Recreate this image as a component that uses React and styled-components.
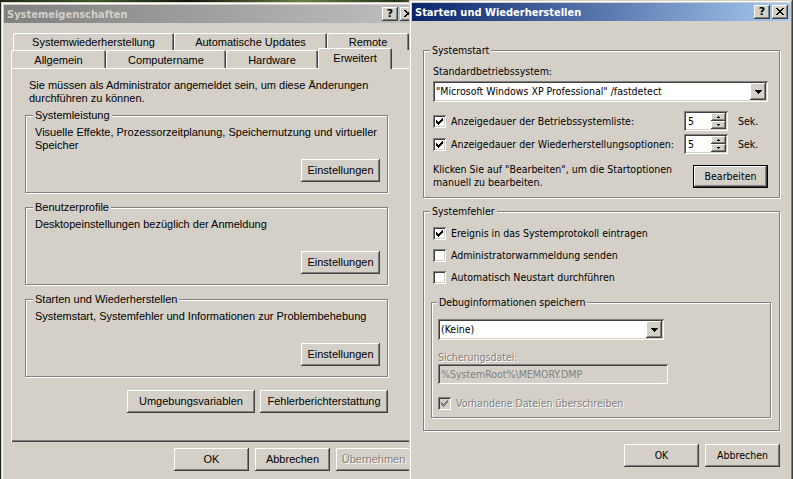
import React from "react";
import styled, { createGlobalStyle, css } from "styled-components";

const FACE = "#d4d0c8";
const LIGHT = "#ffffff";
const SHADOW = "#808080";
const DARK = "#404040";

const LEFT_FONT = `"Liberation Sans", Arial, sans-serif`;
const RIGHT_FONT = `"DejaVu Sans Condensed", "DejaVu Sans", sans-serif`;

const GlobalStyle = createGlobalStyle`
  *, *::before, *::after { box-sizing: border-box; }
  html, body { margin: 0; padding: 0; background: #18220f; overflow: hidden; }
  #root { width: 793px; height: 479px; }
`;

const raisedEdge = css`
  box-shadow: inset -1px -1px ${DARK}, inset 1px 1px ${LIGHT},
    inset -2px -2px ${SHADOW}, inset 2px 2px ${FACE};
`;
const sunkenEdge = css`
  box-shadow: inset 1px 1px ${SHADOW}, inset -1px -1px ${LIGHT},
    inset 2px 2px ${DARK}, inset -2px -2px ${FACE};
`;
const embossed = css`
  color: ${SHADOW};
  text-shadow: 1px 1px 0 ${LIGHT};
`;

const Desktop = styled.div`
  position: relative;
  width: 793px;
  height: 479px;
  overflow: hidden;
  background: linear-gradient(
    90deg,
    #1d2a14 0%,
    #3f5a2a 12%,
    #0f170b 24%,
    #6a8040 38%,
    #233318 50%,
    #b8c098 58%,
    #2e4220 70%,
    #8a9a5a 84%,
    #1a2410 100%
  );
`;

const Window = styled.div`
  position: absolute;
  left: ${(p) => p.$left}px;
  top: ${(p) => p.$top}px;
  width: ${(p) => p.$width}px;
  height: ${(p) => p.$height}px;
  z-index: ${(p) => p.$z};
  padding: 3px;
  display: flex;
  flex-direction: column;
  background: ${FACE};
  color: #000;
  font-family: ${(p) => p.$font};
  font-size: ${(p) => p.$size}px;
  line-height: 13px;
  box-shadow: inset -1px -1px ${DARK}, inset 1px 1px ${FACE},
    inset -2px -2px ${SHADOW}, inset 2px 2px ${LIGHT};
`;

const TitleBar = styled.div`
  flex: none;
  height: 18px;
  display: flex;
  align-items: center;
  padding: 0 2px;
  background: ${(p) =>
    p.$active
      ? "linear-gradient(90deg, #0a246a 0%, #a6caf0 100%)"
      : "linear-gradient(90deg, #808080 0%, #c0c0c0 100%)"};
  color: ${(p) => (p.$active ? "#fff" : FACE)};
  font: bold 11px ${RIGHT_FONT};
`;

const TitleText = styled.span`
  flex: 1;
  padding-left: 1px;
  white-space: nowrap;
  overflow: hidden;
`;

const CaptionButtons = styled.div`
  display: flex;
  gap: 2px;
`;

const CaptionButton = styled.div`
  width: 16px;
  height: 14px;
  display: flex;
  align-items: center;
  justify-content: center;
  background: ${FACE};
  color: #000;
  font: bold 11px "DejaVu Sans", sans-serif;
  line-height: 1;
  padding-bottom: 1px;
  ${raisedEdge}
`;

const PixelGlyph = ({ rows, color = "#000" }) => {
  const w = rows[0].length;
  const h = rows.length;
  return (
    <svg
      width={w}
      height={h}
      viewBox={`0 0 ${w} ${h}`}
      shapeRendering="crispEdges"
      aria-hidden="true"
      style={{ display: "block" }}
    >
      {rows.flatMap((r, y) =>
        [...r].map((c, x) =>
          c === "#" ? (
            <rect key={`${x}-${y}`} x={x} y={y} width="1" height="1" fill={color} />
          ) : null
        )
      )}
    </svg>
  );
};

const CLOSE = [
  "##....##",
  ".##..##.",
  "..####..",
  "...##...",
  "..####..",
  ".##..##.",
  "##....##",
];
const CHECK = [
  "......#",
  ".....##",
  "#...###",
  "##.###.",
  "#####..",
  ".###...",
  "..#....",
];
const DOWN = ["#######", ".#####.", "..###..", "...#..."];
const SPIN_UP = ["..#..", ".###."];
const SPIN_DOWN = [".###.", "..#.."];

const Caption = ({ active, children }) => (
  <TitleBar $active={active}>
    <TitleText>{children}</TitleText>
    <CaptionButtons>
      <CaptionButton>?</CaptionButton>
      <CaptionButton>
        <PixelGlyph rows={CLOSE} />
      </CaptionButton>
    </CaptionButtons>
  </TitleBar>
);

/* ---------- shared controls ---------- */

const Button = styled.div`
  flex: none;
  width: ${(p) => p.$w || 75}px;
  height: 23px;
  display: flex;
  align-items: center;
  justify-content: center;
  background: ${FACE};
  white-space: nowrap;
  ${raisedEdge}
  ${(p) =>
    p.$default &&
    css`
      border: 1px solid #000;
    `}
  ${(p) => p.$disabled && embossed}
`;

const GroupBox = styled.div`
  position: relative;
  flex: none;
  display: flex;
  flex-direction: column;
  border: 1px solid ${SHADOW};
  box-shadow: inset 1px 1px ${LIGHT}, 1px 1px ${LIGHT};
`;

const Legend = styled.span`
  position: absolute;
  top: -7px;
  left: ${(p) => p.$inset}px;
  padding: 0 2px;
  line-height: 13px;
  background: ${FACE};
  white-space: nowrap;
`;

const CheckBoxFrame = styled.span`
  flex: none;
  width: 13px;
  height: 13px;
  padding: 3px;
  display: block;
  background: ${(p) => (p.$disabled ? FACE : "#fff")};
  ${sunkenEdge}
`;

const CheckBox = ({ checked, disabled }) => (
  <CheckBoxFrame $disabled={disabled}>
    {checked && <PixelGlyph rows={CHECK} color={disabled ? SHADOW : "#000"} />}
  </CheckBoxFrame>
);

const CheckLabel = styled.div`
  display: flex;
  align-items: center;
  gap: 5px;
  height: ${(p) => p.$h || 20}px;
  white-space: nowrap;
  ${(p) =>
    p.$disabled &&
    css`
      & > span:last-child {
        ${embossed}
      }
    `}
`;

const Combo = styled.div`
  width: ${(p) => p.$w}px;
  height: 21px;
  padding: 2px;
  display: flex;
  align-items: center;
  background: #fff;
  ${sunkenEdge}
`;

const ComboValue = styled.span`
  flex: 1;
  padding-left: 1px;
  white-space: nowrap;
  overflow: hidden;
`;

const ArrowButton = styled.span`
  flex: none;
  width: 16px;
  height: 17px;
  display: flex;
  align-items: center;
  justify-content: center;
  background: ${FACE};
  ${raisedEdge}
`;

const Dropdown = ({ w, value }) => (
  <Combo $w={w}>
    <ComboValue>{value}</ComboValue>
    <ArrowButton>
      <PixelGlyph rows={DOWN} />
    </ArrowButton>
  </Combo>
);

/* ---------- left window: Systemeigenschaften ---------- */

const PropsClient = styled.div`
  flex: 1;
  display: flex;
  flex-direction: column;
  padding: 10px 0 0 7px;
`;

const TabRow = styled.div`
  display: flex;
  align-items: flex-end;
  height: ${(p) => p.$h}px;
  padding-left: ${(p) => p.$indent || 0}px;
`;

const Tab = styled.div`
  flex: none;
  width: ${(p) => p.$w}px;
  height: ${(p) => p.$h}px;
  padding-top: ${(p) => p.$pt}px;
  text-align: center;
  white-space: nowrap;
  background: ${FACE};
  border-radius: 2px 2px 0 0;
  box-shadow: inset 1px 1px ${LIGHT}, inset -1px 0 ${DARK}, inset -2px 0 ${SHADOW};
  ${(p) =>
    p.$selected &&
    css`
      position: relative;
      z-index: 1;
      margin-bottom: -1px;
    `}
`;

const TabPanel = styled.div`
  flex: none;
  width: 400px;
  height: 374px;
  padding: 11px 23px 0 14px;
  display: flex;
  flex-direction: column;
  background: ${FACE};
  box-shadow: inset 1px 1px ${LIGHT}, inset -1px -1px ${DARK},
    inset -2px -2px ${SHADOW};
`;

const Intro = styled.p`
  margin: 0 0 0 4px;
  white-space: nowrap;
`;

const SectionList = styled.div`
  display: flex;
  flex-direction: column;
  gap: 14px;
  margin-top: 10px;
`;

const SectionBox = styled(GroupBox)`
  height: 78px;
  padding: 10px 7px 10px 9px;
`;

const SectionText = styled.p`
  margin: 0;
`;

const SectionButton = styled(Button)`
  margin-top: auto;
  align-self: flex-end;
`;

const PanelButtons = styled.div`
  display: flex;
  justify-content: flex-end;
  gap: 5px;
  margin-top: 13px;
`;

const DialogButtons = styled.div`
  flex: none;
  display: flex;
  justify-content: flex-end;
  gap: 6px;
  width: ${(p) => p.$w}px;
  margin-top: ${(p) => p.$mt}px;
`;

/* ---------- right window: Starten und Wiederherstellen ---------- */

const StartupClient = styled.div`
  flex: 1;
  display: flex;
  flex-direction: column;
  padding: 29px 10px 0 11px;
`;

const StartBox = styled(GroupBox)`
  padding: 14px 11px 8px 9px;
`;

const FieldLabel = styled.div`
  white-space: nowrap;
  margin-top: ${(p) => p.$mt || 0}px;
  ${(p) => p.$disabled && embossed}
`;

const ComboSpacer = styled.div`
  margin-top: 3px;
`;

const TimeoutGrid = styled.div`
  display: grid;
  grid-template-columns: 1fr 44px 32px;
  grid-auto-rows: 20px;
  column-gap: 10px;
  row-gap: 3px;
  align-items: center;
  margin-top: 9px;
`;

const Spin = styled.div`
  width: 44px;
  height: 20px;
  padding: 2px;
  display: flex;
  background: #fff;
  ${sunkenEdge}
`;

const SpinValue = styled.span`
  flex: 1;
  padding-left: 2px;
  line-height: 16px;
`;

const SpinButtons = styled.div`
  width: 15px;
  display: flex;
  flex-direction: column;
`;

const SpinButton = styled.span`
  flex: 1;
  display: flex;
  align-items: center;
  justify-content: center;
  background: ${FACE};
  ${raisedEdge}
`;

const Spinner = ({ value }) => (
  <Spin>
    <SpinValue>{value}</SpinValue>
    <SpinButtons>
      <SpinButton>
        <PixelGlyph rows={SPIN_UP} />
      </SpinButton>
      <SpinButton>
        <PixelGlyph rows={SPIN_DOWN} />
      </SpinButton>
    </SpinButtons>
  </Spin>
);

const EditRow = styled.div`
  display: flex;
  align-items: center;
  justify-content: space-between;
  margin-top: 9px;
`;

const EditHint = styled.p`
  margin: 0;
  white-space: nowrap;
`;

const ErrorBox = styled(GroupBox)`
  margin-top: 13px;
  padding: 10px 8px 12px 9px;
`;

const DebugBox = styled(GroupBox)`
  margin: 14px 0 0 -2px;
  padding: 16px 6px 3px 6px;
`;

const DisabledField = styled.div`
  width: 230px;
  height: 20px;
  padding: 0 3px;
  display: flex;
  align-items: center;
  background: ${FACE};
  color: ${SHADOW};
  white-space: nowrap;
  ${sunkenEdge}
`;

const Spaced = styled.div`
  margin-top: ${(p) => p.$mt}px;
`;

const Check = ({ checked, disabled, h, children }) => (
  <CheckLabel $h={h} $disabled={disabled}>
    <CheckBox checked={checked} disabled={disabled} />
    <span>{children}</span>
  </CheckLabel>
);

const sections = [
  {
    title: "Systemleistung",
    text: (
      <>
        Visuelle Effekte, Prozessorzeitplanung, Speichernutzung und virtueller
        <br />
        Speicher
      </>
    ),
  },
  { title: "Benutzerprofile", text: "Desktopeinstellungen bezüglich der Anmeldung" },
  {
    title: "Starten und Wiederherstellen",
    text: "Systemstart, Systemfehler und Informationen zur Problembehebung",
  },
];

export default function App() {
  return (
    <>
      <GlobalStyle />
      <Desktop>
        <Window $left={1} $top={2} $width={420} $height={482} $z={1} $font={LEFT_FONT} $size={11}>
          <Caption>Systemeigenschaften</Caption>
          <PropsClient>
            <TabRow $h={17} $indent={2}>
              <Tab $w={161} $h={17} $pt={3}>Systemwiederherstellung</Tab>
              <Tab $w={153} $h={17} $pt={3}>Automatische Updates</Tab>
              <Tab $w={82} $h={17} $pt={3}>Remote</Tab>
            </TabRow>
            <TabRow $h={18}>
              <Tab $w={95} $h={18} $pt={4}>Allgemein</Tab>
              <Tab $w={120} $h={18} $pt={4}>Computername</Tab>
              <Tab $w={92} $h={18} $pt={4}>Hardware</Tab>
              <Tab $w={74} $h={21} $pt={4} $selected>Erweitert</Tab>
            </TabRow>
            <TabPanel>
              <Intro>
                Sie müssen als Administrator angemeldet sein, um diese Änderungen
                <br />
                durchführen zu können.
              </Intro>
              <SectionList>
                {sections.map((s) => (
                  <SectionBox key={s.title}>
                    <Legend $inset={7}>{s.title}</Legend>
                    <SectionText>{s.text}</SectionText>
                    <SectionButton $w={79}>Einstellungen</SectionButton>
                  </SectionBox>
                ))}
              </SectionList>
              <PanelButtons>
                <Button $w={128}>Umgebungsvariablen</Button>
                <Button $w={128}>Fehlerberichterstattung</Button>
              </PanelButtons>
            </TabPanel>
            <DialogButtons $w={400} $mt={6}>
              <Button>OK</Button>
              <Button>Abbrechen</Button>
              <Button $disabled>Übernehmen</Button>
            </DialogButtons>
          </PropsClient>
        </Window>

        <Window $left={409} $top={0} $width={384} $height={482} $z={2} $font={RIGHT_FONT} $size={10.5}>
          <Caption active>Starten und Wiederherstellen</Caption>
          <StartupClient>
            <StartBox>
              <Legend $inset={6}>Systemstart</Legend>
              <FieldLabel>Standardbetriebssystem:</FieldLabel>
              <ComboSpacer>
                <Dropdown w={335} value={'"Microsoft Windows XP Professional" /fastdetect'} />
              </ComboSpacer>
              <TimeoutGrid>
                <Check checked>Anzeigedauer der Betriebssystemliste:</Check>
                <Spinner value="5" />
                <span>Sek.</span>
                <Check checked>Anzeigedauer der Wiederherstellungsoptionen:</Check>
                <Spinner value="5" />
                <span>Sek.</span>
              </TimeoutGrid>
              <EditRow>
                <EditHint>
                  Klicken Sie auf "Bearbeiten", um die Startoptionen
                  <br />
                  manuell zu bearbeiten.
                </EditHint>
                <Button $default>Bearbeiten</Button>
              </EditRow>
            </StartBox>

            <ErrorBox>
              <Legend $inset={6}>Systemfehler</Legend>
              <Check checked h={22}>Ereignis in das Systemprotokoll eintragen</Check>
              <Check h={22}>Administratorwarnmeldung senden</Check>
              <Check h={22}>Automatisch Neustart durchführen</Check>
              <DebugBox>
                <Legend $inset={5}>Debuginformationen speichern</Legend>
                <Dropdown w={226} value="(Keine)" />
                <FieldLabel $mt={11} $disabled>Sicherungsdatei:</FieldLabel>
                <DisabledField>%SystemRoot%\MEMORY.DMP</DisabledField>
                <Spaced $mt={8}>
                  <Check checked disabled h={22}>Vorhandene Dateien überschreiben</Check>
                </Spaced>
              </DebugBox>
            </ErrorBox>

            <DialogButtons $w={357} $mt={13}>
              <Button>OK</Button>
              <Button>Abbrechen</Button>
            </DialogButtons>
          </StartupClient>
        </Window>
      </Desktop>
    </>
  );
}
